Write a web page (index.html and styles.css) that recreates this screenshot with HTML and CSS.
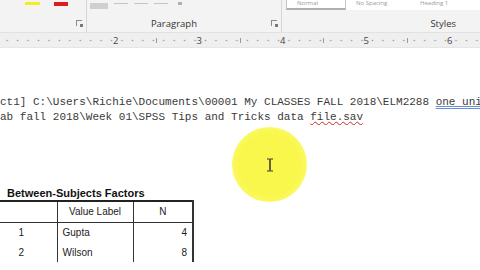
FILE: index.html
```html
<!DOCTYPE html>
<html lang="en">
  <head>
    <meta charset="UTF-8">
    <title>SPSS Tips and Tricks</title>
    <link rel="stylesheet" href="styles.css">
  </head>
  <body>
    <div class="ribbon">
      <div class="group font">
        <div class="tools">
          <span class="swatch yellow"></span>
          <span class="swatch red"></span>
        </div>
        <div class="foot"><span class="launch"></span></div>
      </div>
      <div class="group para">
        <div class="tools">
          <span class="shade"></span>
          <span class="dash"></span>
          <span class="dash"></span>
          <span class="dash"></span>
          <span class="dot"></span>
        </div>
        <div class="foot"><span class="label">Paragraph</span><span class="launch"></span></div>
      </div>
      <div class="group styles">
        <div class="gallery">
          <span class="style sel">Normal</span>
          <span class="style">No Spacing</span>
          <span class="style">Heading 1</span>
        </div>
        <div class="foot"><span class="label">Styles</span></div>
      </div>
    </div>

    <div class="ruler">
      <span>2</span><span>3</span><span>4</span><span>5</span><span>6</span>
    </div>

    <div class="doc">
      <p class="code">ct1] C:\Users\Richie\Documents\00001 My CLASSES FALL 2018\ELM2288 <span class="gram">one uni</span></p>
      <p class="code">ab fall 2018\Week 01\SPSS Tips and Tricks data <span class="spell">file.sav</span></p>

      <h3>Between-Subjects Factors</h3>
      <table class="factors">
        <tr><th></th><th>Value Label</th><th>N</th></tr>
        <tr><td class="c">1</td><td>Gupta</td><td class="r">4</td></tr>
        <tr><td class="c">2</td><td>Wilson</td><td class="r">8</td></tr>
      </table>

      <div class="spot">
        <svg width="8" height="14" viewBox="0 0 8 14"><path d="M1 1h2.5q.5 0 .5 1v10q0 1-.5 1H1M7 1H4.5q-.5 0-.5 1v10q0 1 .5 1H7" fill="none" stroke="#333" stroke-width="1"/></svg>
      </div>
    </div>
  </body>
</html>
```

FILE: styles.css
```css
* { box-sizing: border-box; }

body {
  margin: 0;
  width: 480px;
  height: 270px;
  overflow: hidden;
  background: #fff;
  font-family: "Liberation Sans", Arial, sans-serif;
}

.ribbon {
  height: 33px;
  display: flex;
  background: #f3f3f3;
  border-bottom: 1px solid #e2e2e2;
}

.group {
  display: flex;
  flex-direction: column;
  justify-content: space-between;
  border-right: 1px solid #d6d6d6;
  padding-bottom: 3px;
}
.group.font { width: 87px; }
.group.para { width: 195px; }
.group.styles { flex: 1; border-right: 0; }

.tools {
  display: flex;
  align-items: flex-start;
  height: 10px;
}

.swatch { height: 3px; width: 15px; margin-top: 2px; }
.swatch.yellow { background: #f4ee1a; margin-left: 25px; }
.swatch.red { background: #d81e1e; margin-left: 14px; height: 4px; width: 14px; }

.shade { width: 18px; height: 6px; margin: 3px 0 0 3px; background: #cfcfcf; }
.dash { width: 14px; height: 1px; margin: 3px 0 0 6px; background: #c4c4c4; }
.dot { width: 4px; height: 3px; margin: 2px 0 0 10px; background: #b0b0b0; }

.foot {
  display: flex;
  align-items: center;
  justify-content: flex-end;
  height: 12px;
  font-family: "Open Sans", "Noto Sans", sans-serif;
  font-size: 9.5px;
  color: #333;
}
.para .foot .label { margin-right: 74px; }
.styles .foot .label { margin-right: 24px; }

.launch {
  width: 6px;
  height: 6px;
  margin-right: 4px;
  border-left: 1px solid #8a8a8a;
  border-top: 1px solid #8a8a8a;
  position: relative;
}
.launch::after {
  content: "";
  position: absolute;
  right: -1px;
  bottom: -1px;
  width: 3px;
  height: 3px;
  background: #777;
}

.gallery {
  display: flex;
  height: 10px;
  margin-left: 4px;
  background: #fff;
}
.style {
  display: block;
  width: 64px;
  padding-left: 10px;
  font-family: "Open Sans", "Noto Sans", sans-serif;
  font-size: 6px;
  line-height: 7px;
  color: #9a9a9a;
}
.style.sel {
  border: 1px solid #c4c4c4;
  border-top: 0;
  border-bottom: 2px solid #b0b0b0;
  height: 10px;
  width: 60px;
}

.ruler {
  height: 15px;
  display: flex;
  padding-left: 113px;
  background-color: #efefef;
  background-image: radial-gradient(circle, #9a9a9a 0.6px, transparent 1.1px);
  background-size: 10.44px 15px;
  background-position: 2px 0;
  border-bottom: 1px solid #e6e6e6;
  font-family: "Open Sans", "Noto Sans", sans-serif;
  font-size: 9.5px;
  line-height: 15px;
  color: #444;
}
.ruler span {
  width: 83.5px;
  flex: none;
  background: linear-gradient(#9a9a9a, #9a9a9a) no-repeat 43px 5px / 1px 5px;
}

.doc {
  position: relative;
  padding-top: 47px;
}

.code {
  margin: 0;
  white-space: pre;
  font-family: "Liberation Mono", "Courier New", monospace;
  font-size: 11px;
  line-height: 15px;
  color: #3a3a3a;
  overflow: hidden;
}
.gram { text-decoration: underline double #6a8fd8; }
.spell { text-decoration: underline wavy #d02828; text-decoration-thickness: 1px; }

h3 {
  margin: 61px 0 0 7px;
  font-size: 11px;
  line-height: 14px;
  color: #111;
}

.factors {
  margin-left: -1px;
  border-collapse: collapse;
  font-size: 10px;
  color: #222;
}
.factors th,
.factors td {
  border-right: 1px solid #333;
  padding: 0 5px;
  height: 20px;
  font-weight: normal;
}
.factors th {
  height: 21px;
  text-align: center;
  border-top: 2px solid #222;
  border-bottom: 1px solid #333;
}
.factors th:nth-child(1) { width: 58px; }
.factors th:nth-child(2) { width: 76px; }
.factors th:nth-child(3) { width: 60px; border-right-width: 2px; }
.factors td:last-child { border-right-width: 2px; }
.factors .c { text-align: center; padding-right: 18px; }
.factors .r { text-align: right; }

.spot {
  position: absolute;
  left: 232px;
  top: 79px;
  width: 75px;
  height: 75px;
  border-radius: 50%;
  background: radial-gradient(circle, #f9f74c 58%, #fbfa78 82%, rgba(255,255,170,0) 100%);
  display: flex;
  align-items: center;
  justify-content: center;
}
```
